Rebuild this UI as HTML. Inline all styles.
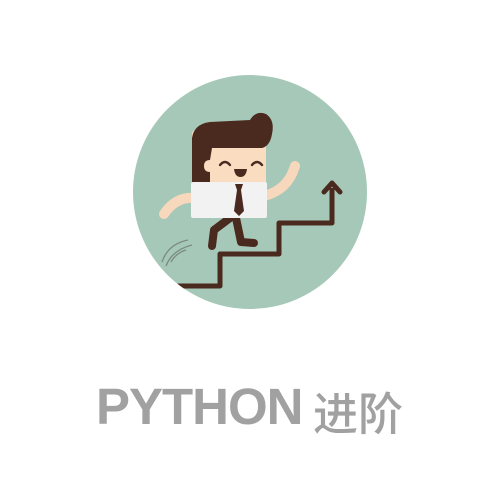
<!DOCTYPE html>
<html><head><meta charset="utf-8"><style>
html,body{margin:0;padding:0;background:#fff;width:500px;height:500px;overflow:hidden}
.t{position:absolute;top:377px;left:96px;font-family:"Liberation Sans",sans-serif;font-weight:bold;font-size:51px;color:#a1a1a1;letter-spacing:-1px;white-space:nowrap}
.c{position:absolute;top:378px;left:313px;font-family:"Noto Sans CJK SC",sans-serif;font-weight:500;font-size:45px;color:#a1a1a1;white-space:nowrap}
</style></head><body>
<svg width="500" height="500" style="position:absolute;left:0;top:0">
<defs><clipPath id="cc"><circle cx="250" cy="192" r="117"/></clipPath></defs>
<circle cx="250" cy="192" r="117" fill="#a6c8b8"/>
<g clip-path="url(#cc)">
<path d="M160 286 H220 V254 H279 V223 H332 V188" fill="none" stroke="#4a2a1e" stroke-width="5" stroke-linejoin="round"/>
</g>
<path d="M324 192 L332 183 L340 192" fill="none" stroke="#4a2a1e" stroke-width="5" stroke-linecap="round" stroke-linejoin="round"/>
<g fill="none" stroke="#7a8a84" stroke-width="1.3">
<path d="M162 262 Q168 244 188 240"/><path d="M166 266 Q172 250 192 245"/><path d="M171 262 Q176 253 186 250"/>
</g>
<path d="M196 198 Q176 196 164 214" fill="none" stroke="#f8d8bc" stroke-width="10" stroke-linecap="round"/>
<path d="M264 196 Q288 190 295 166" fill="none" stroke="#f8d8bc" stroke-width="10" stroke-linecap="round"/>
<path d="M230 218 L214 230 L212 246" fill="none" stroke="#4a2a1e" stroke-width="8" stroke-linecap="round" stroke-linejoin="round"/>
<path d="M236 218 L241 242 L254 243" fill="none" stroke="#4a2a1e" stroke-width="8" stroke-linecap="round" stroke-linejoin="round"/>
<rect x="192" y="130" width="74" height="60" rx="4" fill="#fadcc0"/>
<path d="M192 190 V138 Q194 124 210 122 L250 120 Q256 110 266 114 Q275 120 272 134 Q270 146 262 148 L212 148 L210 160 Q204 160 204 166 Q204 172 210 172 L210 190 Z" fill="#4a2a1e"/>
<g fill="none" stroke="#4a2a1e" stroke-width="2.4" stroke-linecap="round">
<path d="M220 165 Q225 159 230 165"/><path d="M252 165 Q257 159 262 165"/>
</g>
<path d="M234 169 H247 Q246 177 240.5 177 Q235 177 234 169 Z" fill="#4a2a1e"/>
<rect x="191" y="182" width="76" height="36" rx="2" fill="#f2f2f2"/>
<path d="M235 184 H243 L241 190 L244 211 L239 216 L234 211 L237 190 Z" fill="#4a2a1e"/>
</svg>
<div class="t">PYTHON</div>
<div class="c">进阶</div>
</body></html>
